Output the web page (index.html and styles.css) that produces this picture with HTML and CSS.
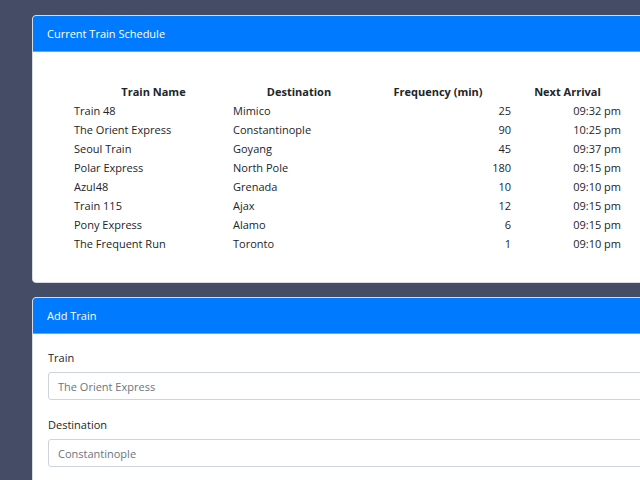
FILE: index.html
```html
<!DOCTYPE html>
<html>
<head>
<meta charset="utf-8">
<title>Train Scheduler</title>
<link rel="stylesheet" href="styles.css">
</head>
<body>
<main class="page">
  <section class="card schedule">
    <div class="card-header">Current Train Schedule</div>
    <div class="card-body schedule-body">
      <div class="table">
        <div class="th">Train Name</div><div class="th">Destination</div><div class="th">Frequency (min)</div><div class="th">Next Arrival</div>
        <div class="td">Train 48</div><div class="td">Mimico</div><div class="td num">25</div><div class="td time">09:32 pm</div>
        <div class="td">The Orient Express</div><div class="td">Constantinople</div><div class="td num">90</div><div class="td time">10:25 pm</div>
        <div class="td">Seoul Train</div><div class="td">Goyang</div><div class="td num">45</div><div class="td time">09:37 pm</div>
        <div class="td">Polar Express</div><div class="td">North Pole</div><div class="td num">180</div><div class="td time">09:15 pm</div>
        <div class="td">Azul48</div><div class="td">Grenada</div><div class="td num">10</div><div class="td time">09:10 pm</div>
        <div class="td">Train 115</div><div class="td">Ajax</div><div class="td num">12</div><div class="td time">09:15 pm</div>
        <div class="td">Pony Express</div><div class="td">Alamo</div><div class="td num">6</div><div class="td time">09:15 pm</div>
        <div class="td">The Frequent Run</div><div class="td">Toronto</div><div class="td num">1</div><div class="td time">09:10 pm</div>
      </div>
    </div>
  </section>
  <section class="card add">
    <div class="card-header">Add Train</div>
    <form class="card-body form-body">
      <div class="field">
        <label class="label" for="train">Train</label>
        <input class="input" id="train" type="text" placeholder="The Orient Express">
      </div>
      <div class="field">
        <label class="label" for="dest">Destination</label>
        <input class="input" id="dest" type="text" placeholder="Constantinople">
      </div>
    </form>
  </section>
</main>
</body>
</html>
```

FILE: styles.css
```css
html, body {
  margin: 0;
  padding: 0;
  height: 100%;
  overflow: hidden;
  background: #444c66;
}
body {
  font-family: "Open Sans", "Noto Sans", sans-serif;
  font-size: 11px;
  color: #212529;
}
.page {
  display: flex;
  flex-direction: column;
  gap: 14px;
  padding: 15px 0 0 32px;
  width: 640px;
}
.card {
  background: #fff;
  border: 1px solid #d7dce4;
  border-radius: 4px;
  overflow: hidden;
}
.card-header {
  background: #007bff;
  color: #fff;
  font-size: 11px;
  height: 35px;
  line-height: 35px;
  padding: 0 14px;
  border-bottom: 1px solid #5fa8ff;
}
.schedule-body {
  padding: 30px 0 29px 41px;
}
.table {
  display: grid;
  grid-template-columns: 159px 132px 146px 113px;
  grid-auto-rows: 19px;
  line-height: 19px;
}
.th {
  font-weight: 700;
  text-align: center;
}
.td {
  white-space: nowrap;
}
.num {
  text-align: right;
}
.time {
  text-align: right;
  padding-right: 3px;
}
.form-body {
  display: flex;
  flex-direction: column;
  gap: 16px;
  padding: 15px 15px 20px;
}
.field {
  display: flex;
  flex-direction: column;
  gap: 5px;
}
.label {
  line-height: 18px;
}
.input {
  height: 28px;
  box-sizing: border-box;
  border: 1px solid #ced4da;
  border-radius: 3px;
  padding: 0 9px;
  font: inherit;
  color: #495057;
}
.input::placeholder {
  color: #6c757d;
}
```
